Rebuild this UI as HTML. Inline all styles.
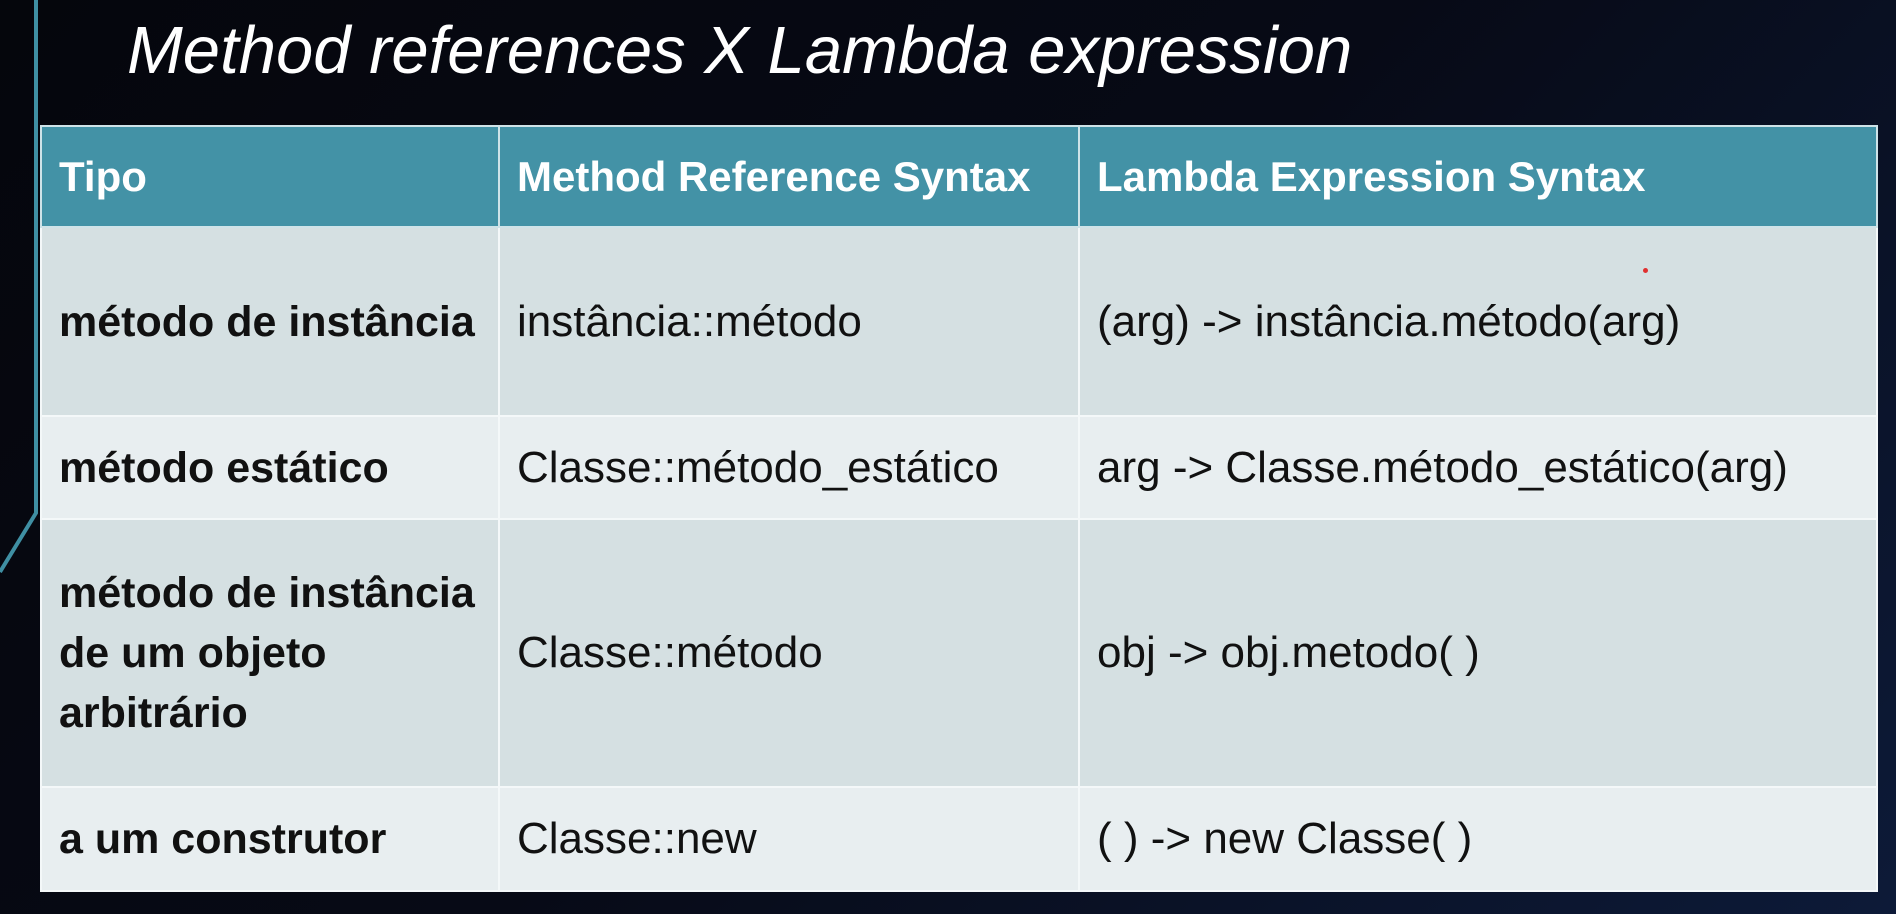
<!DOCTYPE html>
<html><head><meta charset="utf-8"><style>
html,body{margin:0;padding:0}
body{width:1896px;height:914px;overflow:hidden;position:relative;background:linear-gradient(135deg,#05060c 0%,#070a16 50%,#0d1a38 100%);font-family:"Liberation Sans",sans-serif}
.title{position:absolute;left:127px;top:12px;font-size:67px;font-style:italic;color:#fff;white-space:nowrap}
table{position:absolute;left:40px;top:125px;width:1836px;border-collapse:collapse;table-layout:fixed}
td{border:2px solid #f4f8f9;padding:0 0 0 17px;font-size:44px;color:#111;vertical-align:middle;line-height:60px}
td.b{font-weight:bold;font-size:43px}
th{border:2px solid #cfe3e8;background:#4392a6;color:#fff;text-align:left;font-size:42px;padding:0 0 0 17px;height:99px}
tr.a td{background:#d5e0e2}
tr.c td{background:#e8eef0}
</style></head><body>
<svg style="position:absolute;left:0;top:0" width="60" height="914"><polyline points="36,0 36,513 0,572" fill="none" stroke="#3f8fa3" stroke-width="4"/></svg>
<div class="title">Method references X Lambda expression</div>
<table>
<colgroup><col style="width:458px"><col style="width:580px"><col style="width:798px"></colgroup>
<tr><th>Tipo</th><th>Method Reference Syntax</th><th>Lambda Expression Syntax</th></tr>
<tr class="a" style="height:189px"><td class="b">método de instância</td><td>instância::método</td><td>(arg) -&gt; instância.método(arg)</td></tr>
<tr class="c" style="height:103px"><td class="b">método estático</td><td>Classe::método_estático</td><td>arg -&gt; Classe.método_estático(arg)</td></tr>
<tr class="a" style="height:268px"><td class="b">método de instância<br>de um objeto<br>arbitrário</td><td>Classe::método</td><td>obj -&gt; obj.metodo( )</td></tr>
<tr class="c" style="height:104px"><td class="b">a um construtor</td><td>Classe::new</td><td>( ) -&gt; new Classe( )</td></tr>
</table>
<div style="position:absolute;left:1643px;top:268px;width:5px;height:5px;border-radius:50%;background:#e03030"></div>
</body></html>
